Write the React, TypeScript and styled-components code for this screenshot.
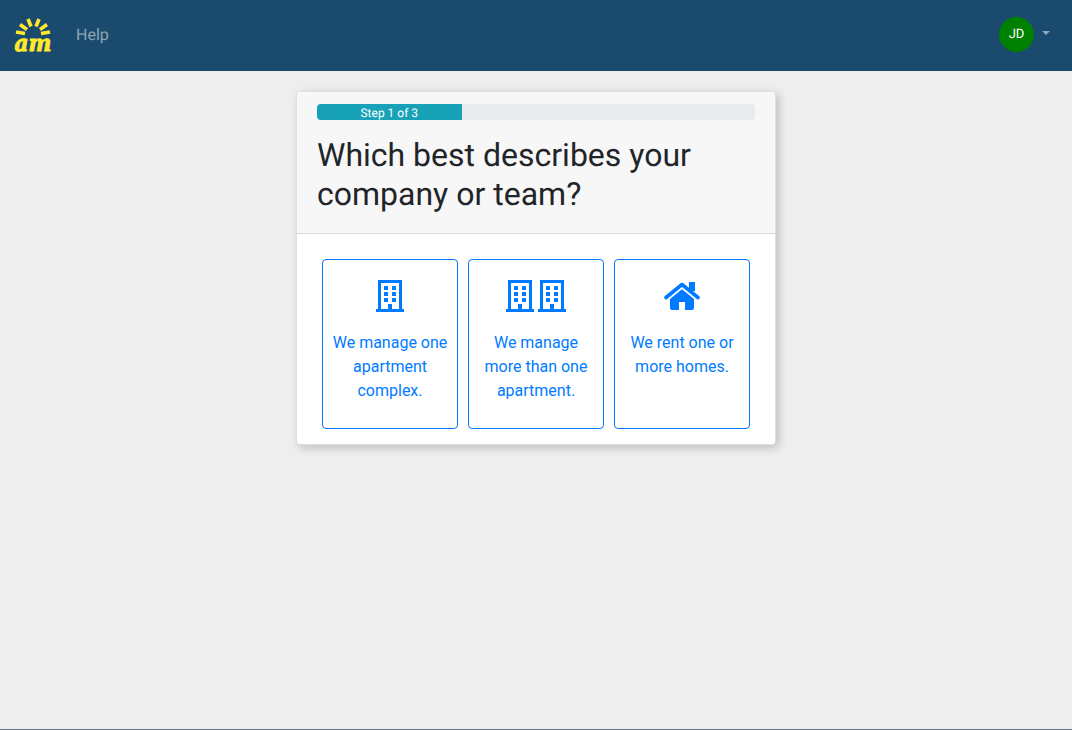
import React from "react";
import styled, { createGlobalStyle } from "styled-components";

const GlobalStyle = createGlobalStyle`
  html, body {
    margin: 0;
    padding: 0;
    height: 100%;
  }
  body {
    font-family: Roboto, "Liberation Sans", sans-serif;
    font-size: 16px;
    line-height: 1.5;
    color: #212529;
    background: #eee;
    text-rendering: geometricPrecision;
  }
  * {
    box-sizing: border-box;
  }
`;

const options = [
  { id: "one", buildings: 1, label: "We manage one apartment complex." },
  { id: "many", buildings: 2, label: "We manage more than one apartment." },
  { id: "homes", buildings: 0, label: "We rent one or more homes." }
];

const Logo = () => (
  <LogoSvg viewBox="0 0 38 34" width="38" height="34">
    <g stroke="#ffe82e" strokeWidth="3.6">
      <line x1="2" y1="14" x2="11" y2="15.5" />
      <line x1="6" y1="6.5" x2="13" y2="11.5" />
      <line x1="14" y1="1" x2="17" y2="8.5" />
      <line x1="25" y1="1" x2="22" y2="8.5" />
      <line x1="33" y1="6.5" x2="26" y2="11.5" />
      <line x1="36" y1="14" x2="27" y2="15.5" />
    </g>
    <text
      x="0.5"
      y="33"
      fill="#ffe82e"
      stroke="#ffe82e"
      strokeWidth="0.9"
      fontFamily="DejaVu Serif, serif"
      fontSize="23"
      fontWeight="700"
      fontStyle="italic"
      textLength="37"
      lengthAdjust="spacingAndGlyphs"
    >
      am
    </text>
  </LogoSvg>
);

const BuildingIcon = () => (
  <IconSvg viewBox="0 0 28 32" width="28" height="32">
    <path
      fillRule="evenodd"
      d="M2 0h24v29h2v3H0v-3h2V0zm3 3v26h7v-5h4v5h7V3H5z"
    />
    <rect x="8" y="6" width="4" height="4" rx="0.6" />
    <rect x="16" y="6" width="4" height="4" rx="0.6" />
    <rect x="8" y="12" width="4" height="4" rx="0.6" />
    <rect x="16" y="12" width="4" height="4" rx="0.6" />
    <rect x="8" y="18" width="4" height="4" rx="0.6" />
    <rect x="16" y="18" width="4" height="4" rx="0.6" />
  </IconSvg>
);

const HomeIcon = () => (
  <IconSvg viewBox="0 0 36 32" width="36" height="32">
    <rect x="25" y="2" width="6" height="9" />
    <path
      d="M2 17.5 18 4.5l16 13"
      fill="none"
      stroke="#007bff"
      strokeWidth="3.6"
      strokeLinecap="round"
      strokeLinejoin="round"
    />
    <path d="M18 9.2 6 19V28a2 2 0 0 0 2 2h7v-8h6v8h7a2 2 0 0 0 2-2V19L18 9.2z" />
  </IconSvg>
);

export default function App() {
  return (
    <>
      <GlobalStyle />
      <Page>
        <Navbar>
          <NavLeft>
            <Logo />
            <NavLink>Help</NavLink>
          </NavLeft>
          <UserMenu>
            <Avatar>JD</Avatar>
            <Caret />
          </UserMenu>
        </Navbar>
        <Main>
          <Card>
            <CardHeader>
              <Progress>
                <ProgressBar style={{ width: "33%" }}>Step 1 of 3</ProgressBar>
              </Progress>
              <Title>Which best describes your company or team?</Title>
            </CardHeader>
            <CardBody>
              {options.map((o) => (
                <Choice key={o.id}>
                  <IconRow>
                    {o.buildings === 0 ? (
                      <HomeIcon />
                    ) : (
                      Array.from({ length: o.buildings }).map((_, i) => (
                        <BuildingIcon key={i} />
                      ))
                    )}
                  </IconRow>
                  {o.label}
                </Choice>
              ))}
            </CardBody>
          </Card>
        </Main>
      </Page>
    </>
  );
}

const Page = styled.div`
  min-height: 730px;
  height: 730px;
  display: flex;
  flex-direction: column;
  border-bottom: 1px solid #6c757d;
`;

const Navbar = styled.nav`
  height: 71px;
  flex-shrink: 0;
  background: #1a4b6e;
  display: flex;
  align-items: center;
  justify-content: space-between;
  padding: 0 22px 1px 14px;
`;

const NavLeft = styled.div`
  display: flex;
  align-items: center;
`;

const LogoSvg = styled.svg`
  display: block;
  overflow: visible;
`;

const NavLink = styled.a`
  margin-left: 24px;
  color: rgba(255, 255, 255, 0.5);
  font-size: 16px;
`;

const UserMenu = styled.div`
  display: flex;
  align-items: center;
  margin-bottom: 1px;
`;

const Avatar = styled.div`
  width: 35px;
  height: 35px;
  border-radius: 50%;
  background: #008000;
  color: #fff;
  font-size: 13px;
  display: flex;
  align-items: center;
  justify-content: center;
`;

const Caret = styled.span`
  width: 0;
  height: 0;
  margin-left: 8px;
  margin-top: -3px;
  border-top: 4.8px solid rgba(255, 255, 255, 0.5);
  border-left: 4.8px solid transparent;
  border-right: 4.8px solid transparent;
`;

const Main = styled.main`
  flex: 1;
  display: flex;
  justify-content: center;
  align-items: flex-start;
  padding-top: 20px;
`;

const Card = styled.div`
  width: 480px;
  background: #fff;
  border: 1px solid rgba(0, 0, 0, 0.125);
  border-radius: 4px;
  box-shadow: 3px 3px 10px rgba(0, 0, 0, 0.2);
  overflow: hidden;
`;

const CardHeader = styled.div`
  padding: 12px 20px;
  background: #f7f7f7;
  border-bottom: 1px solid rgba(0, 0, 0, 0.125);
`;

const Progress = styled.div`
  height: 16px;
  background: #e9ecef;
  border-radius: 4px;
  overflow: hidden;
  display: flex;
`;

const ProgressBar = styled.div`
  background: #17a2b8;
  color: #fff;
  font-size: 12px;
  line-height: 18px;
  text-align: center;
`;

const Title = styled.h2`
  margin: 16px 0 7px;
  font-size: 32px;
  font-weight: 400;
  line-height: 39px;
`;

const CardBody = styled.div`
  padding: 25px 25px 15px;
  display: flex;
  gap: 10px;
`;

const Choice = styled.button`
  width: 136px;
  height: 170px;
  padding: 20px 8px 0;
  background: #fff;
  border: 1px solid #007bff;
  border-radius: 4px;
  color: #007bff;
  font-family: inherit;
  font-size: 16px;
  line-height: 24px;
  text-align: center;
  display: flex;
  flex-direction: column;
  align-items: center;
  justify-content: flex-start;
`;

const IconRow = styled.div`
  height: 32px;
  margin-bottom: 19px;
  display: flex;
  gap: 4px;
  justify-content: center;
`;

const IconSvg = styled.svg`
  display: block;
  fill: #007bff;
`;
